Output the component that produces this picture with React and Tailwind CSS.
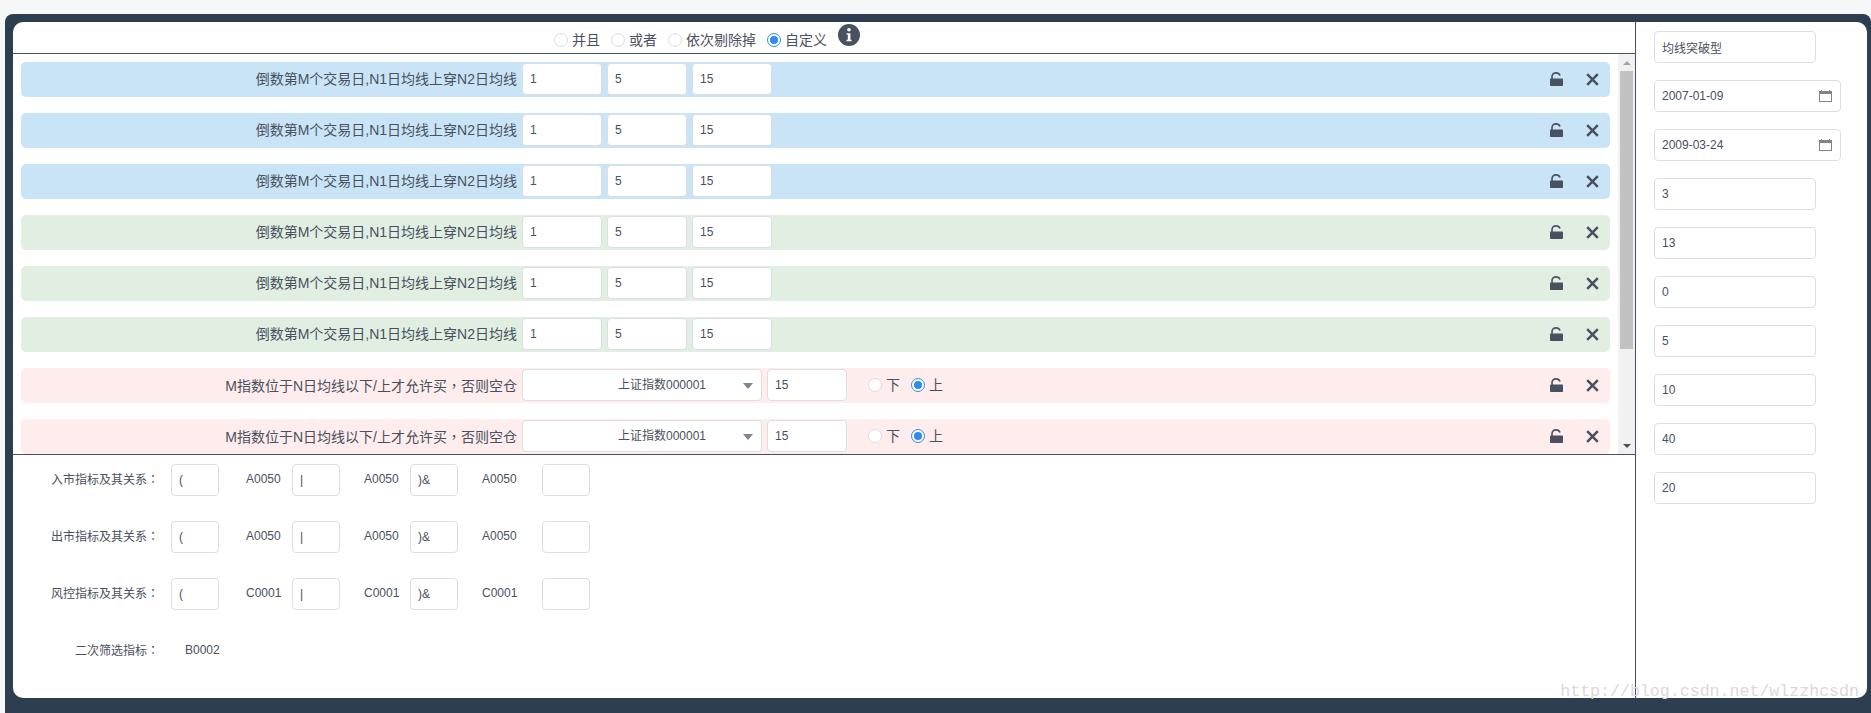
const inputClass =
  "h-8 rounded border border-[#dddee1] bg-white px-[7px] text-xs text-[#495060] outline-none";

const punct = "font-['Noto_Sans_CJK_TC',sans-serif]";

const fields = ["3", "13", "0", "5", "10", "40", "20"];

const relations = [
  { label: "入市指标及其关系", code: "A0050" },
  { label: "出市指标及其关系", code: "A0050" },
  { label: "风控指标及其关系", code: "C0001" },
];

function Radio({ checked, label }) {
  return (
    <label className="flex items-center gap-1 text-sm leading-5 text-[#495060]">
      <span
        className={
          checked
            ? "flex h-3.5 w-3.5 items-center justify-center rounded-full border border-[#2d8cf0] bg-white"
            : "h-3.5 w-3.5 rounded-full border border-[#dddee1] bg-white"
        }
      >
        {checked && <span className="h-2 w-2 rounded-full bg-[#2d8cf0]" />}
      </span>
      {label}
    </label>
  );
}

function LockIcon() {
  return (
    <svg width="13" height="14" viewBox="0 0 13 14" fill="none">
      <path d="M2 7V4.8C2 2.4 3.8 0.9 6 0.9C7.9 0.9 9.4 1.9 10 3.6" stroke="#495060" strokeWidth="1.6" />
      <rect x="0" y="6.5" width="13" height="7.5" rx="0.8" fill="#495060" />
    </svg>
  );
}

function CloseIcon() {
  return (
    <svg width="13" height="13" viewBox="0 0 13 13" fill="none">
      <path d="M1.2 1.2L11.8 11.8M11.8 1.2L1.2 11.8" stroke="#495060" strokeWidth="2.5" />
    </svg>
  );
}

function InfoIcon() {
  return (
    <svg width="22" height="22" viewBox="0 0 22 22" className="-mt-1.5">
      <circle cx="11" cy="11" r="11" fill="#495060" />
      <circle cx="11" cy="5.8" r="1.8" fill="#fff" />
      <path d="M8.5 9.2H12.4V15.8H13.6V17.2H8.5V15.8H9.8V10.6H8.5Z" fill="#fff" />
    </svg>
  );
}

function CalendarIcon() {
  return (
    <svg width="13" height="12" viewBox="0 0 13 12" className="absolute top-[10px] right-[9px]">
      <rect x="0.5" y="1.5" width="12" height="10" fill="#fff" stroke="#80848f" />
      <rect x="0" y="1" width="13" height="3" fill="#80848f" />
      <rect x="2" y="0" width="1" height="1" fill="#80848f" />
      <rect x="10" y="0" width="1" height="1" fill="#80848f" />
    </svg>
  );
}

function Row({ color, children, label }) {
  return (
    <div className={`flex h-[35px] shrink-0 items-start rounded-[5px] pt-px ${color}`}>
      <div className="w-[501px] pr-[5px] text-right text-sm leading-8 text-[#495060]">{label}</div>
      {children}
      <div className="mr-[11px] ml-auto flex h-8 items-center gap-[23px]">
        <LockIcon />
        <CloseIcon />
      </div>
    </div>
  );
}

function CrossRow({ color }) {
  return (
    <Row color={color} label="倒数第M个交易日,N1日均线上穿N2日均线">
      <div className="flex gap-[5px]">
        <input readOnly value="1" className={`${inputClass} w-20`} />
        <input readOnly value="5" className={`${inputClass} w-20`} />
        <input readOnly value="15" className={`${inputClass} w-20`} />
      </div>
    </Row>
  );
}

function IndexRow() {
  return (
    <Row
      color="bg-[#ffecec]"
      label={
        <>
          M指数位于N日均线以下/上才允许买<span className={punct}>，</span>否则空仓
        </>
      }
    >
      <div className="relative flex h-8 w-60 items-center rounded border border-[#dddee1] bg-white pl-[95px] text-xs text-[#495060]">
        上证指数000001
        <span className="absolute top-[13px] right-2 h-0 w-0 border-x-[5px] border-t-[6px] border-x-transparent border-t-[#80848f]" />
      </div>
      <input readOnly value="15" className={`${inputClass} ml-[5px] w-20`} />
      <div className="ml-[21px] flex h-8 items-center gap-[11px]">
        <Radio label="下" />
        <Radio checked label="上" />
      </div>
    </Row>
  );
}

function Scrollbar() {
  return (
    <div className="flex w-[17px] shrink-0 flex-col items-center bg-[#f1f1f1]">
      <div className="flex h-[17px] shrink-0 items-center justify-center">
        <span className="h-0 w-0 border-x-4 border-b-4 border-x-transparent border-b-[#a3a3a3]" />
      </div>
      <div className="h-[278px] w-[13px] shrink-0 bg-[#c1c1c1]" />
      <div className="mt-auto flex h-[17px] shrink-0 items-center justify-center">
        <span className="h-0 w-0 border-x-4 border-t-4 border-x-transparent border-t-[#505050]" />
      </div>
    </div>
  );
}

function RelationRow({ label, code }) {
  return (
    <div className="flex h-8 items-center text-xs text-[#495060]">
      <div className="w-[146px] pb-0.5 text-right">
        {label}
        <span className={punct}>：</span>
      </div>
      <input readOnly value="(" className={`${inputClass} ml-3 w-12`} />
      <div className="w-[73px] pb-0.5 pl-[27px]">{code}</div>
      <input readOnly value="|" className={`${inputClass} w-12`} />
      <div className="w-[70px] pb-0.5 pl-6">{code}</div>
      <input readOnly value=")&" className={`${inputClass} w-12`} />
      <div className="w-[84px] pb-0.5 pl-6">{code}</div>
      <input readOnly className={`${inputClass} w-12`} />
    </div>
  );
}

export default function App() {
  return (
    <div className="relative h-[713px] overflow-hidden bg-[#f5f7f9] pt-3.5 pl-[5px] font-['Liberation_Sans','Noto_Sans_CJK_SC',sans-serif]">
      <div className="h-full rounded-t-lg bg-[#2c3e50] pt-2 pr-1 pb-[15px] pl-2">
        <div className="flex h-full overflow-hidden rounded-[10px] bg-white">
          {/* left column: conditions and relations */}
          <div className="flex w-[1623px] shrink-0 flex-col border-r border-[#495060]">
            <div className="flex h-8 shrink-0 items-start gap-[11px] border-b border-[#495060] pt-2 pl-[541px]">
              <Radio label="并且" />
              <Radio label="或者" />
              <Radio label="依次剔除掉" />
              <Radio checked label="自定义" />
              <InfoIcon />
            </div>

            <div className="flex h-[401px] shrink-0 border-b border-[#495060]">
              <div className="flex flex-1 flex-col gap-4 overflow-hidden px-2 pt-2">
                <CrossRow color="bg-[#c9e4f6]" />
                <CrossRow color="bg-[#c9e4f6]" />
                <CrossRow color="bg-[#c9e4f6]" />
                <CrossRow color="bg-[#e1efe3]" />
                <CrossRow color="bg-[#e1efe3]" />
                <CrossRow color="bg-[#e1efe3]" />
                <IndexRow />
                <IndexRow />
              </div>
              <Scrollbar />
            </div>

            <div className="flex flex-col gap-[25px] pt-[9px]">
              {relations.map((r) => (
                <RelationRow key={r.label} label={r.label} code={r.code} />
              ))}
              <div className="flex h-8 items-center text-xs text-[#495060]">
                <div className="w-[146px] pb-0.5 text-right">
                  二次筛选指标<span className={punct}>：</span>
                </div>
                <div className="ml-[26px] pb-0.5">B0002</div>
              </div>
            </div>
          </div>

          {/* right column: strategy params */}
          <div className="flex flex-1 flex-col items-start gap-[17px] pt-[9px] pl-[18px]">
            <input readOnly value="均线突破型" className={`${inputClass} w-[162px]`} />
            <div className="relative w-[187px]">
              <input readOnly value="2007-01-09" className={`${inputClass} w-full`} />
              <CalendarIcon />
            </div>
            <div className="relative w-[187px]">
              <input readOnly value="2009-03-24" className={`${inputClass} w-full`} />
              <CalendarIcon />
            </div>
            {fields.map((f, i) => (
              <input key={i} readOnly value={f} className={`${inputClass} w-[162px]`} />
            ))}
          </div>
        </div>
      </div>

      {/* blog watermark baked into the screenshot */}
      <div className="absolute top-[682px] right-[12px] font-['Liberation_Mono',monospace] text-[16.6px] leading-5 text-[#d9d9d9]">
        http://blog.csdn.net/wlzzhcsdn
      </div>
    </div>
  );
}
